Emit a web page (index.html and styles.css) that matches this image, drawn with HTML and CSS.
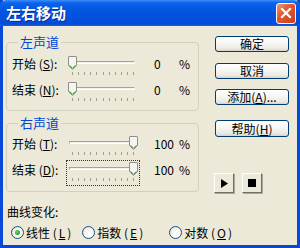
FILE: index.html
```html
<!DOCTYPE html>
<html>
<head>
<meta charset="utf-8">
<link rel="stylesheet" href="styles.css">
</head>
<body>
<div class="window">
  <div class="titlebar">
    <span class="title">左右移动</span>
    <span class="close"><svg width="12" height="12" viewBox="0 0 12 12"><path d="M2 2 L10 10 M10 2 L2 10" stroke="#fff" stroke-width="2.2" stroke-linecap="square"/></svg></span>
  </div>
  <div class="body">
    <div class="left">
      <fieldset class="group g1">
        <legend>左声道</legend>
        <div class="row">
          <span class="lbl">开始 (<u>S</u>):</span>
          <span class="slider"><span class="track"></span><span class="ticks"></span><svg class="thumb" style="left:0px" width="9" height="14" viewBox="0 0 9 14"><path d="M0.5 1 Q0.5 0.5 1 0.5 H8 Q8.5 0.5 8.5 1 V9.5 L4.5 13.5 L0.5 9.5 Z" fill="#F4F4F0" stroke="#8F8F88"/><path d="M1.5 9.3 L4.5 12.3 L7.5 9.3" fill="none" stroke="#21A121"/></svg></span>
          <span class="val">0</span><span class="pct">%</span>
        </div>
        <div class="row">
          <span class="lbl">结束 (<u>N</u>):</span>
          <span class="slider"><span class="track"></span><span class="ticks"></span><svg class="thumb" style="left:0px" width="9" height="14" viewBox="0 0 9 14"><path d="M0.5 1 Q0.5 0.5 1 0.5 H8 Q8.5 0.5 8.5 1 V9.5 L4.5 13.5 L0.5 9.5 Z" fill="#F4F4F0" stroke="#8F8F88"/><path d="M1.5 9.3 L4.5 12.3 L7.5 9.3" fill="none" stroke="#21A121"/></svg></span>
          <span class="val">0</span><span class="pct">%</span>
        </div>
      </fieldset>
      <fieldset class="group g2">
        <legend>右声道</legend>
        <div class="row">
          <span class="lbl">开始 (<u>T</u>):</span>
          <span class="slider"><span class="track"></span><span class="ticks"></span><svg class="thumb" style="left:61px" width="9" height="14" viewBox="0 0 9 14"><path d="M0.5 1 Q0.5 0.5 1 0.5 H8 Q8.5 0.5 8.5 1 V9.5 L4.5 13.5 L0.5 9.5 Z" fill="#F4F4F0" stroke="#8F8F88"/><path d="M1.5 9.3 L4.5 12.3 L7.5 9.3" fill="none" stroke="#21A121"/></svg></span>
          <span class="val">100</span><span class="pct">%</span>
        </div>
        <div class="row">
          <span class="lbl">结束 (<u>D</u>):</span>
          <span class="slider focus"><span class="track"></span><span class="ticks"></span><svg class="thumb" style="left:61px" width="9" height="14" viewBox="0 0 9 14"><path d="M0.5 1 Q0.5 0.5 1 0.5 H8 Q8.5 0.5 8.5 1 V9.5 L4.5 13.5 L0.5 9.5 Z" fill="#F4F4F0" stroke="#8F8F88"/><path d="M1.5 9.3 L4.5 12.3 L7.5 9.3" fill="none" stroke="#21A121"/></svg></span>
          <span class="val">100</span><span class="pct">%</span>
        </div>
      </fieldset>
      <div class="curve">曲线变化:</div>
      <div class="radios">
        <span class="radio r1"><span class="dot checked"></span>线性 (<u>L</u>)</span>
        <span class="radio r2"><span class="dot"></span>指数 (<u>E</u>)</span>
        <span class="radio r3"><span class="dot"></span>对数 (<u>O</u>)</span>
      </div>
    </div>
    <div class="right">
      <button class="btn b1">确定</button>
      <button class="btn b2">取消</button>
      <button class="btn b3">添加(<u>A</u>)...</button>
      <button class="btn b4">帮助(<u>H</u>)</button>
      <div class="media">
        <span class="mbtn"><svg width="8" height="9" viewBox="0 0 8 9"><path d="M1 0 L8 4.5 L1 9 Z" fill="#000"/></svg></span>
        <span class="mbtn"><svg width="8" height="8" viewBox="0 0 8 8"><rect width="8" height="8" fill="#000"/></svg></span>
      </div>
    </div>
  </div>
</div>
</body>
</html>
```
FILE: styles.css
```css
* { box-sizing: border-box; }
html, body { margin: 0; padding: 0; }
body {
  width: 300px;
  height: 248px;
  overflow: hidden;
  font-family: "Noto Sans CJK SC", "Liberation Sans", sans-serif;
  font-size: 12px;
  color: #000;
  background: #ECE9D8;
}
.window {
  width: 300px;
  height: 248px;
  display: flex;
  flex-direction: column;
  border-left: 3px solid #0849D8;
  border-right: 3px solid #0849D8;
  border-bottom: 3px solid #0846D4;
  background: #ECE9D8;
}
.titlebar {
  height: 26px;
  margin: 0 -3px;
  display: flex;
  align-items: center;
  justify-content: space-between;
  padding: 0 4px 0 6px;
  background: linear-gradient(#3E8EF6 0px, #0A62EC 3px, #0355E2 10px, #0450DC 20px, #0449D6 24px, #1A5FDC 26px);
  border-radius: 6px 6px 0 0;
}
.title {
  color: #fff;
  font-weight: bold;
  font-size: 15px;
  text-shadow: 1px 1px 0 #0A2A9A;
  line-height: 18px;
}
.close {
  width: 20px;
  height: 21px;
  border: 1px solid #fff;
  border-radius: 3px;
  background: linear-gradient(135deg, #F09A7C 0%, #E2582F 40%, #C9401B 100%);
  display: flex;
  align-items: center;
  justify-content: center;
}
.body {
  flex: 1;
  display: flex;
  padding: 9px 0 0 3px;
}
.left {
  width: 193px;
  display: flex;
  flex-direction: column;
}
.group {
  margin: 0;
  padding: 1px 0 8px 5px;
  border: 1px solid #D0D0BF;
  border-radius: 4px;
  min-width: 0;
}
.group legend {
  margin-left: 6px;
  padding: 0 2px;
  color: #0046D5;
  font-size: 13px;
  line-height: 14px;
}
.g2 { margin-top: 5px; padding-top: 0; padding-bottom: 9px; }
.row {
  height: 26px;
  display: flex;
  align-items: center;
}
.lbl {
  width: 56px;
  white-space: nowrap;
}
.lbl u, .radio u { text-decoration-thickness: 1px; }
.slider {
  position: relative;
  width: 70px;
  height: 22px;
  margin-top: 8px;
  margin-right: 2px;
  display: block;
}
.track {
  position: absolute;
  left: 1px;
  right: 3px;
  top: 5px;
  height: 3px;
  border-top: 1px solid #A3A39A;
  border-left: 1px solid #A3A39A;
  border-bottom: 1px solid #fff;
  border-right: 1px solid #fff;
  background: #F2F2EC;
}
.ticks {
  position: absolute;
  left: 4px;
  width: 62px;
  top: 16px;
  height: 3px;
  background: repeating-linear-gradient(90deg, #9E9E98 0 1px, transparent 1px 6.1px);
}
.thumb {
  position: absolute;
  top: 0px;
}
.focus {
  outline: 1px dotted #333;
  outline-offset: 1px;
}
.val {
  margin-left: 14px;
  width: 25px;
}
.curve {
  margin-top: 12px;
  line-height: 16px;
  padding-left: 1px;
}
.radios {
  margin-top: 4px;
  display: flex;
  align-items: center;
  height: 16px;
  padding-left: 5px;
}
.radio {
  display: flex;
  align-items: center;
  gap: 2px;
  white-space: nowrap;
}
.r2 { margin-left: 11px; }
.r3 { margin-left: 26px; }
.dot {
  width: 13px;
  height: 13px;
  border-radius: 50%;
  border: 1px solid #1C5180;
  background: radial-gradient(circle at 60% 60%, #fff 0%, #F4F3EE 50%, #D7D4CA 100%);
  position: relative;
}
.dot.checked::after {
  content: "";
  position: absolute;
  left: 3px;
  top: 3px;
  width: 5px;
  height: 5px;
  border-radius: 50%;
  background: radial-gradient(circle at 40% 40%, #6CD76C, #21A121 70%);
}
.right {
  margin-left: 15px;
  width: 76px;
  display: flex;
  flex-direction: column;
  align-items: flex-start;
  padding-top: 1px;
}
.btn {
  margin-left: 1px;
  width: 74px;
  height: 16px;
  padding: 0;
  font-family: inherit;
  font-size: 12px;
  line-height: 14px;
  color: #000;
  border: 1px solid #003C74;
  border-radius: 3px;
  background: linear-gradient(#FFFFFF 0%, #F7F7F4 40%, #ECEBE5 80%, #D8D3C8 100%);
  display: flex;
  align-items: center;
  justify-content: center;
}
.b2 { margin-top: 11px; }
.b3 { margin-top: 10px; }
.b4 { margin-top: 15px; height: 17px; }
.media {
  margin-top: 36px;
  display: flex;
  gap: 8px;
}
.mbtn {
  width: 20px;
  height: 20px;
  display: flex;
  align-items: center;
  justify-content: center;
  background: #ECE9D8;
  border-top: 1px solid #fff;
  border-left: 1px solid #fff;
  border-right: 1px solid #716F64;
  border-bottom: 1px solid #716F64;
  box-shadow: 1px 1px 0 #ACA899;
}
```
